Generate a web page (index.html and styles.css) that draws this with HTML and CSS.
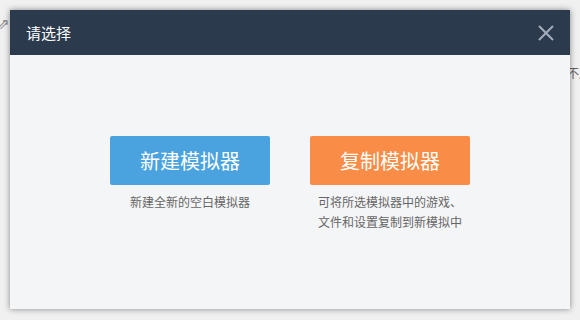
FILE: index.html
```html
<!DOCTYPE html>
<html lang="zh-CN">
<head>
    <meta charset="UTF-8">
    <title>请选择</title>
    <link rel="stylesheet" href="styles.css">
</head>
<body>
    <span class="bg-icon">⇗</span>
    <span class="bg-text">不用</span>
    <div class="dialog">
        <div class="header">
            <h1 class="title">请选择</h1>
            <button class="close" aria-label="关闭">
                <svg width="16" height="16" viewBox="0 0 16 16">
                    <path d="M1 1 L15 15 M15 1 L1 15" stroke="#a3adbb" stroke-width="2" fill="none"/>
                </svg>
            </button>
        </div>
        <div class="content">
            <div class="option">
                <button class="btn btn-blue">新建模拟器</button>
                <p class="desc">新建全新的空白模拟器</p>
            </div>
            <div class="option">
                <button class="btn btn-orange">复制模拟器</button>
                <p class="desc">可将所选模拟器中的游戏、<br>文件和设置复制到新模拟中</p>
            </div>
        </div>
    </div>
</body>
</html>
```

FILE: styles.css
```css
*{
    margin: 0;
    padding: 0;
    box-sizing: border-box;
}
body{
    font-family: "Microsoft YaHei", "Noto Sans CJK SC", sans-serif;
    background-color: #f0f0f0;
    width: 580px;
    height: 320px;
    overflow: hidden;
    position: relative;
    padding: 10px;
}

.bg-icon {
    position: absolute;
    left: -3px;
    top: 12px;
    font-size: 15px;
    color: #888;
}
.bg-text {
    position: absolute;
    left: 567px;
    top: 64px;
    font-size: 12px;
    color: #666;
    white-space: nowrap;
}

.dialog {
    position: relative;
    width: 560px;
    height: 299px;
    background-color: #f4f5f7;
    box-shadow: 0 0 6px rgba(0, 0, 0, 0.45);
    display: flex;
    flex-direction: column;
}

.header {
    height: 45px;
    background-color: #2c3a4d;
    display: flex;
    align-items: center;
    justify-content: space-between;
    padding: 0 16px 0 16px;
}
.title {
    font-size: 15px;
    font-weight: normal;
    color: #fff;
}
.close {
    background: none;
    border: none;
    width: 16px;
    height: 16px;
    display: flex;
}

.content {
    flex: 1;
    display: flex;
    justify-content: center;
    align-items: flex-start;
    gap: 40px;
    padding-top: 81px;
}
.option {
    width: 160px;
    display: flex;
    flex-direction: column;
    align-items: center;
}

.btn {
    width: 160px;
    height: 49px;
    border: none;
    border-radius: 2px;
    color: #fff;
    font-family: inherit;
    font-size: 20px;
}
.btn-blue {
    background-color: #4aa3df;
}
.btn-orange {
    background-color: #f98c46;
}

.desc {
    margin-top: 7px;
    font-size: 12px;
    line-height: 20px;
    color: #666;
    text-align: center;
    white-space: nowrap;
}
```
